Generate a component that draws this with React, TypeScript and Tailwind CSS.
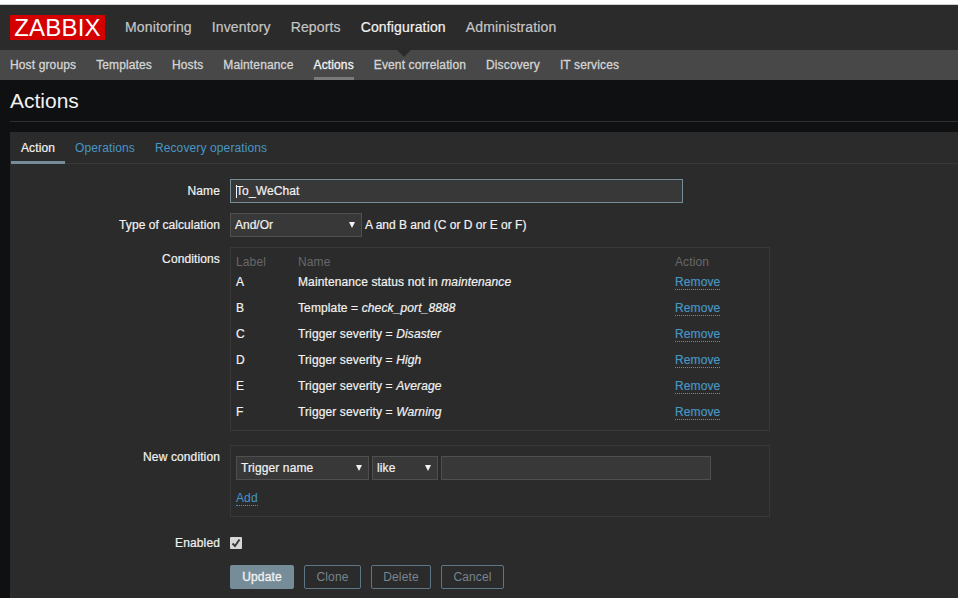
const mainNav = ['Monitoring', 'Inventory', 'Reports', 'Configuration', 'Administration'];
const subNav = ['Host groups', 'Templates', 'Hosts', 'Maintenance', 'Actions', 'Event correlation', 'Discovery', 'IT services'];

const conditions = [
  { label: 'A', name: 'Maintenance status not in ', value: 'maintenance' },
  { label: 'B', name: 'Template = ', value: 'check_port_8888' },
  { label: 'C', name: 'Trigger severity = ', value: 'Disaster' },
  { label: 'D', name: 'Trigger severity = ', value: 'High' },
  { label: 'E', name: 'Trigger severity = ', value: 'Average' },
  { label: 'F', name: 'Trigger severity = ', value: 'Warning' },
];

function FieldLabel({ children, className = '' }: { children: string; className?: string }) {
  return <div className={`pr-[10px] text-right text-[12px] text-[#f2f2f2] [-webkit-text-stroke:0.2px] ${className}`}>{children}</div>;
}

function Select({ value, className = '' }: { value: string; className?: string }) {
  return (
    <div className={`flex h-[24px] items-center justify-between border border-[#4f4f4f] bg-[#383838] pl-[4px] pr-[6px] text-[12px] text-[#f2f2f2] [-webkit-text-stroke:0.2px] ${className}`}>
      <span>{value}</span>
      <span className="h-0 w-0 border-x-[3.5px] border-t-[6px] border-x-transparent border-t-[#f2f2f2]" />
    </div>
  );
}

function DottedLink({ children }: { children: string }) {
  return (
    <a className="border-b border-dotted border-[#4796c4] text-[12px] leading-[14px] text-[#4796c4]">{children}</a>
  );
}

function GhostButton({ children, className = '' }: { children: string; className?: string }) {
  return (
    <button className={`flex h-[24px] items-center justify-center rounded-[2px] border border-[#5d7685] text-[12px] text-[#77858e] ${className}`}>
      {children}
    </button>
  );
}

export default function App() {
  return (
    <div className="h-[598px] w-[958px] overflow-hidden bg-[#0e1012] font-['Liberation_Sans',Arial,sans-serif] tracking-[0.12px]">
      <div className="h-[5px] border-b border-[#cfcfcf] bg-white" />

      <header className="flex h-[45px] items-center bg-[#2b2b2b] pl-[10px]">
        <div className="flex h-[25px] w-[95px] items-center justify-center bg-[#d40000] text-[24px] leading-none tracking-[0.2px] text-white">
          ZABBIX
        </div>
        <nav className="ml-[20px] flex gap-[20px] text-[14px] tracking-[0.14px]">
          {mainNav.map((item) => (
            <span key={item} className={item === 'Configuration' ? 'text-[#f2f2f2] [-webkit-text-stroke:0.2px]' : 'text-[#c5c5c5] [-webkit-text-stroke:0.2px]'}>
              {item}
            </span>
          ))}
        </nav>
      </header>

      <div className="relative flex h-[30px] gap-[20px] bg-[#484848] pl-[10px] tracking-[0.13px]">
        <span className="absolute left-[397px] top-0 h-0 w-0 border-x-[7px] border-t-[7px] border-x-transparent border-t-[#2b2b2b]" />
        {subNav.map((item) => (
          <span
            key={item}
            className={
              item === 'Actions'
                ? 'flex h-[30px] items-center border-b-[3px] border-[#7a7a7a] pt-[3px] text-[12px] text-[#f2f2f2] [-webkit-text-stroke:0.3px]'
                : 'flex h-[30px] items-center text-[12px] text-[#d4d4d4] [-webkit-text-stroke:0.3px]'
            }
          >
            {item}
          </span>
        ))}
      </div>

      <div className="ml-[10px] flex h-[42px] items-center border-b border-[#2f3030] text-[21px] tracking-normal text-[#f2f2f2]">
        Actions
      </div>

      <main className="ml-[10px] mt-[10px] h-[500px] border-l border-[#2b2b2b] bg-[#2b2b2b]">
        <div className="flex h-[32px] border-b border-[#383838] text-[12px]">
          <span className="flex h-[32px] w-[54px] items-center justify-center border-b-[3px] border-[#768d99] pt-[3px] text-[#f2f2f2] [-webkit-text-stroke:0.2px]">
            Action
          </span>
          <span className="ml-[10px] flex items-center text-[#4796c4]">Operations</span>
          <span className="ml-[20px] flex items-center text-[#4796c4]">Recovery operations</span>
        </div>

        <div className="mt-[15px] grid grid-cols-[219px_1fr]">
          <FieldLabel className="leading-[24px]">Name</FieldLabel>
          <div className="flex h-[24px] w-[453px] items-center border border-[#768d99] bg-[#383838] pl-[5px] text-[12px] text-[#f2f2f2] [-webkit-text-stroke:0.2px]">
            <span className="mr-[-1px] h-[13px] w-px bg-[#f2f2f2]" />
            To_WeChat
          </div>

          <FieldLabel className="mt-[10px] leading-[24px] tracking-[0.08px]">Type of calculation</FieldLabel>
          <div className="mt-[10px] flex items-center gap-[3px] text-[12px] tracking-normal text-[#f2f2f2] [-webkit-text-stroke:0.2px]">
            <Select value="And/Or" className="w-[132px]" />
            A and B and (C or D or E or F)
          </div>

          <FieldLabel className="mt-[10px] pt-[3px]">Conditions</FieldLabel>
          <div className="mt-[10px] h-[184px] w-[540px] border border-[#383838] px-[5px] pt-[5px]">
            <div className="grid grid-cols-[62px_377px_1fr] text-[12px]">
              <div className="h-[16px] text-[#686868]">Label</div>
              <div className="h-[16px] text-[#686868]">Name</div>
              <div className="h-[16px] text-[#686868]">Action</div>
              {conditions.map((c) => (
                <div key={c.label} className="col-span-3 grid h-[26px] grid-cols-[62px_377px_1fr] items-center text-[#f2f2f2] [-webkit-text-stroke:0.2px]">
                  <span>{c.label}</span>
                  <span>
                    {c.name}
                    <i>{c.value}</i>
                  </span>
                  <span>
                    <DottedLink>Remove</DottedLink>
                  </span>
                </div>
              ))}
            </div>
          </div>

          <FieldLabel className="mt-[14px] pt-[3px]">New condition</FieldLabel>
          <div className="mt-[14px] h-[72px] w-[540px] border border-[#383838] px-[5px] pt-[10px]">
            <div className="flex gap-[3px]">
              <Select value="Trigger name" className="w-[133px]" />
              <Select value="like" className="w-[66px]" />
              <div className="h-[24px] w-[270px] border border-[#4f4f4f] bg-[#383838]" />
            </div>
            <div className="mt-[5px]">
              <DottedLink>Add</DottedLink>
            </div>
          </div>

          <FieldLabel className="mt-[18px] leading-[16px]">Enabled</FieldLabel>
          <div className="mt-[18px] flex h-[16px] items-center">
            <span className="flex h-[12px] w-[12px] items-center justify-center rounded-[1px] bg-[#d8d8d8]">
              <svg width="10" height="10" viewBox="0 0 10 10">
                <path d="M1.5 5.5 L4 8 L8.5 1.5" fill="none" stroke="#3a3a3a" strokeWidth="2" />
              </svg>
            </span>
          </div>

          <div />
          <div className="mt-[14px] flex gap-[10px]">
            <button className="flex h-[24px] w-[64px] items-center justify-center rounded-[2px] bg-[#768d99] text-[12px] text-[#f2f2f2] [-webkit-text-stroke:0.3px]">
              Update
            </button>
            <GhostButton className="w-[57px]">Clone</GhostButton>
            <GhostButton className="w-[60px]">Delete</GhostButton>
            <GhostButton className="w-[63px]">Cancel</GhostButton>
          </div>
        </div>
      </main>
    </div>
  );
}
